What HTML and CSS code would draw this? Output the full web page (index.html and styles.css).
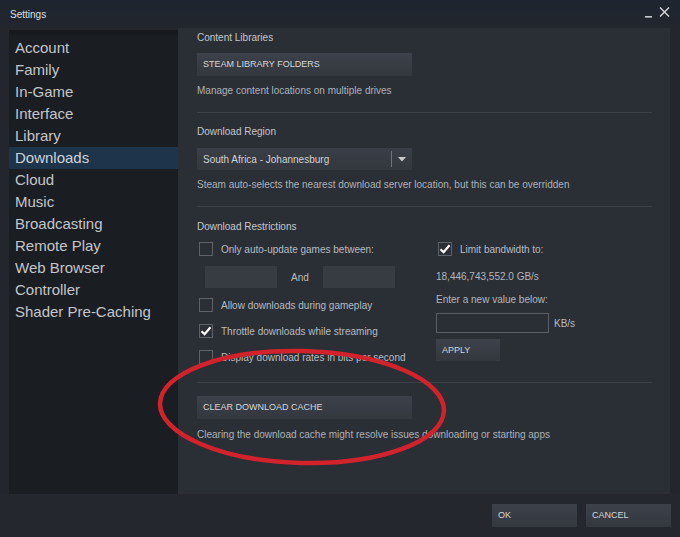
FILE: index.html
```html
<!DOCTYPE html>
<html>
<head>
<meta charset="utf-8">
<title>Settings</title>
<link rel="stylesheet" href="styles.css">
</head>
<body>
<div class="window">
  <div class="titlebar">
    <span class="title">Settings</span>
    <div class="controls">
      <svg class="ctl-min" width="7" height="3" viewBox="0 0 7 3"><rect x="0" y="1" width="7" height="1.6" fill="#c9cbce"/></svg>
      <svg class="ctl-close" width="11" height="10" viewBox="0 0 11 10"><path d="M1 0.5 L10 9.5 M10 0.5 L1 9.5" stroke="#d6d8da" stroke-width="1.4" fill="none"/></svg>
    </div>
  </div>
  <div class="main">
    <nav class="sidebar">
      <div class="nav-item">Account</div>
      <div class="nav-item">Family</div>
      <div class="nav-item">In-Game</div>
      <div class="nav-item">Interface</div>
      <div class="nav-item">Library</div>
      <div class="nav-item active">Downloads</div>
      <div class="nav-item">Cloud</div>
      <div class="nav-item">Music</div>
      <div class="nav-item">Broadcasting</div>
      <div class="nav-item">Remote Play</div>
      <div class="nav-item">Web Browser</div>
      <div class="nav-item">Controller</div>
      <div class="nav-item">Shader Pre-Caching</div>
    </nav>
    <section class="content">
      <div class="heading">Content Libraries</div>
      <div class="btn btn-wide mt8">STEAM LIBRARY FOLDERS</div>
      <div class="desc mt8">Manage content locations on multiple drives</div>
      <div class="sep"></div>

      <div class="heading mt12">Download Region</div>
      <div class="dropdown">
        <span class="dd-value">South Africa - Johannesburg</span>
        <span class="dd-div"></span>
        <svg class="dd-arrow" width="8" height="5" viewBox="0 0 8 5"><path d="M0 0 L8 0 L4 4.5 Z" fill="#c9cbce"/></svg>
      </div>
      <div class="desc mt8">Steam auto-selects the nearest download server location, but this can be overridden</div>
      <div class="sep"></div>

      <div class="heading mt13">Download Restrictions</div>
      <div class="restrictions">
        <div class="col-left">
          <div class="check-row mt8"><span class="cb"></span><span class="label">Only auto-update games between:</span></div>
          <div class="time-row">
            <span class="time-input"></span>
            <span class="and">And</span>
            <span class="time-input"></span>
          </div>
          <div class="check-row mt10"><span class="cb"></span><span class="label">Allow downloads during gameplay</span></div>
          <div class="check-row mt12"><span class="cb checked"><svg width="12" height="12" viewBox="0 0 12 12"><path d="M1.5 6.2 L4.6 9.2 L10.5 2.3" stroke="#ffffff" stroke-width="2.2" fill="none"/></svg></span><span class="label">Throttle downloads while streaming</span></div>
          <div class="check-row mt12"><span class="cb"></span><span class="label">Display download rates in bits per second</span></div>
        </div>
        <div class="col-right">
          <div class="check-row mt8 ml2"><span class="cb checked"><svg width="12" height="12" viewBox="0 0 12 12"><path d="M1.5 6.2 L4.6 9.2 L10.5 2.3" stroke="#ffffff" stroke-width="2.2" fill="none"/></svg></span><span class="label">Limit bandwidth to:</span></div>
          <div class="plain mt14">18,446,743,552.0 GB/s</div>
          <div class="plain mt9">Enter a new value below:</div>
          <div class="bw-row">
            <span class="bw-input"></span>
            <span class="unit">KB/s</span>
          </div>
          <div class="btn btn-apply">APPLY</div>
        </div>
      </div>
      <div class="sep sep-low"></div>
      <div class="btn btn-wide mt13">CLEAR DOWNLOAD CACHE</div>
      <div class="desc mt9">Clearing the download cache might resolve issues downloading or starting apps</div>
    </section>
  </div>
  <div class="footer">
    <div class="btn btn-footer">OK</div>
    <div class="btn btn-footer">CANCEL</div>
  </div>
</div>
<svg class="annotation" width="680" height="537" viewBox="0 0 680 537">
  <ellipse cx="302" cy="407" rx="142" ry="56" transform="rotate(1.5 302 407)" fill="none" stroke="#d2232c" stroke-width="4.5"/>
</svg>
</body>
</html>
```

FILE: styles.css
```css
* { box-sizing: border-box; }

body {
  margin: 0;
  width: 680px;
  height: 537px;
  overflow: hidden;
  position: relative;
  background: #23262c;
  font-family: "Liberation Sans", Arial, sans-serif;
}

.window {
  display: flex;
  flex-direction: column;
  height: 537px;
}

.titlebar {
  height: 28px;
  display: flex;
  align-items: center;
  padding: 0 10px;
  background: linear-gradient(#1e2530, #22262d);
}

.title {
  font-size: 10px;
  color: #dfe1e3;
}

.controls {
  margin-left: auto;
  display: flex;
  align-items: flex-start;
  gap: 7px;
  height: 12px;
}

.ctl-min { margin-top: 7px; }
.ctl-close { margin-top: -1px; }

.main {
  display: flex;
  height: 466px;
  padding: 0 10px 0 9px;
}

.sidebar {
  width: 169px;
  margin-top: 2px;
  padding-top: 7px;
  background: linear-gradient(#15181c 0px, #1a1d22 8px, #1a1d22 100%);
}

.nav-item {
  height: 22px;
  line-height: 22px;
  padding-left: 6px;
  font-size: 15px;
  color: #c4c6c9;
}

.nav-item.active {
  background: #1d344a;
  color: #cfd3d8;
}

.content {
  flex: 1;
  background: #2a2e35;
  padding: 3px 18px 0 19px;
}

.heading {
  font-size: 10px;
  line-height: 14px;
  color: #c5c8cc;
}

.desc, .plain {
  font-size: 10px;
  line-height: 14px;
  color: #aeb2b7;
}

.plain { color: #b4b7bb; }

.mt8 { margin-top: 8px; }
.mt9 { margin-top: 9px; }
.mt10 { margin-top: 10px; }
.mt12 { margin-top: 12px; }
.mt13 { margin-top: 13px; }
.mt14 { margin-top: 14px; }
.ml2 { margin-left: 2px; }

.btn {
  height: 23px;
  line-height: 23px;
  padding-left: 6px;
  font-size: 9px;
  color: #d6d8da;
  background: linear-gradient(#3d4149, #33373e);
  text-transform: uppercase;
}

.btn-wide { width: 215px; }

.sep {
  height: 1px;
  margin-top: 14px;
  background: #3c4049;
}

.sep-low { margin-top: 18px; }

.dropdown {
  margin-top: 9px;
  width: 215px;
  height: 22px;
  display: flex;
  align-items: center;
  background: linear-gradient(#3a3e46, #33373e);
}

.dd-value {
  flex: 1;
  padding-left: 6px;
  font-size: 10px;
  color: #d0d2d5;
}

.dd-div {
  width: 1px;
  height: 16px;
  background: #70747a;
}

.dd-arrow {
  margin: 1px 6px 0 6px;
}

.restrictions {
  display: grid;
  grid-template-columns: 239px 1fr;
}

.check-row {
  display: flex;
  align-items: center;
  gap: 8px;
  height: 14px;
  padding-left: 2px;
}

.col-right .check-row { padding-left: 0; }

.cb {
  width: 14px;
  height: 14px;
  border: 1px solid #5e6269;
  display: flex;
  align-items: center;
  justify-content: center;
  flex: none;
}

.label {
  font-size: 10px;
  color: #b9bcc0;
  white-space: nowrap;
}

.time-row {
  margin-top: 10px;
  margin-left: 8px;
  display: flex;
  align-items: center;
  height: 22px;
}

.time-input {
  width: 72px;
  height: 22px;
  background: #373b42;
}

.and {
  width: 46px;
  text-align: center;
  font-size: 10px;
  color: #b9bcc0;
}

.bw-row {
  margin-top: 6px;
  display: flex;
  align-items: center;
  gap: 5px;
}

.bw-input {
  width: 113px;
  height: 20px;
  border: 1px solid #5a5e65;
  background: #2a2e35;
}

.unit {
  font-size: 10px;
  color: #b9bcc0;
}

.btn-apply {
  margin-top: 6px;
  width: 64px;
  height: 22px;
  line-height: 22px;
}

.footer {
  height: 43px;
  display: flex;
  justify-content: flex-end;
  gap: 9px;
  padding: 10px 9px 0 0;
  background: #24272d;
}

.btn-footer {
  width: 85px;
  height: 23px;
}

.annotation {
  position: absolute;
  left: 0;
  top: 0;
  pointer-events: none;
}
```
